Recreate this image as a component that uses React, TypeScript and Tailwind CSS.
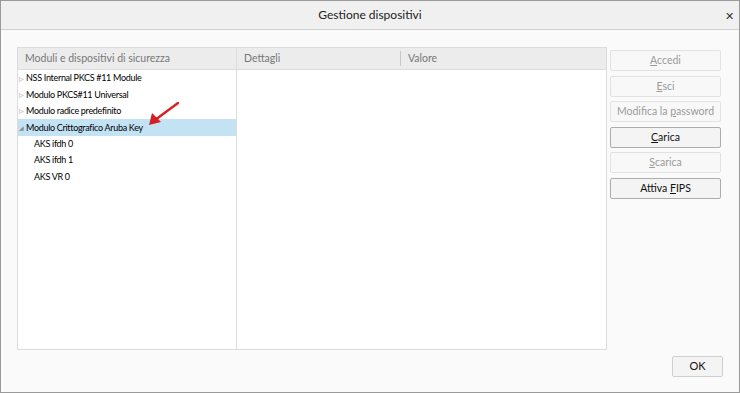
import React from 'react';

const FONT = { fontFamily: 'Lato, "Noto Sans", sans-serif' };

const modules = [
  { name: 'NSS Internal PKCS #11 Module', open: false },
  { name: 'Modulo PKCS#11 Universal', open: false },
  { name: 'Modulo radice predefinito', open: false },
  { name: 'Modulo Crittografico Aruba Key', open: true, selected: true },
];

const slots = ['AKS ifdh 0', 'AKS ifdh 1', 'AKS VR 0'];

const ActionButton = ({
  label,
  accel,
  enabled,
}: {
  label: string;
  accel: number;
  enabled?: boolean;
}) => (
  <button
    className={`h-[21px] w-[111px] whitespace-nowrap rounded-[2px] border px-0 text-[10.5px] leading-none ${
      enabled
        ? 'border-[#acacac] bg-[#f4f4f4] text-[#111]'
        : 'border-[#e2e2e2] bg-[#f8f8f8] text-[#9a9a9a]'
    }`}
  >
    {label.slice(0, accel)}
    <span className="underline">{label[accel]}</span>
    {label.slice(accel + 1)}
  </button>
);

const App = () => {
  return (
    <div
      className="flex h-[393px] w-[740px] flex-col border border-[#9a9a9a] bg-[#fafafa]"
      style={FONT}
    >
      <div className="relative flex h-[29px] shrink-0 items-center justify-center border-b border-[#cfcfcf] bg-[#f0f0f0] text-[12px] text-[#222]">
        Gestione dispositivi
        <span className="absolute right-[5px] top-[7px] text-[11px] text-[#333]">✕</span>
      </div>

      <div className="flex flex-1 gap-[3px] pl-[16px] pr-[18px] pt-[17px]">
        <div className="flex h-[303px] flex-1 border border-[#dcdcdc] bg-white">
          <div className="relative flex w-[219px] flex-col border-r border-[#dcdcdc]">
            <div className="flex h-[22px] items-center border-b border-[#dcdcdc] bg-[#ececec] pl-[7px] text-[10.5px] text-[#777]">
              Moduli e dispositivi di sicurezza
            </div>
            <div className="flex flex-col">
              {modules.map((m) => (
                <div
                  key={m.name}
                  className={`flex h-[16.4px] items-center pl-[1px] text-[9px] tracking-[-0.3px] text-black ${
                    m.selected ? 'bg-[#c3e3f5]' : ''
                  }`}
                >
                  <span className="mr-[2px] w-[5px] text-[6px] text-[#8a8a8a]">
                    {m.open ? '◢' : '▷'}
                  </span>
                  {m.name}
                </div>
              ))}
              {slots.map((s) => (
                <div
                  key={s}
                  className="flex h-[16.4px] items-center pl-[16px] text-[9px] tracking-[-0.3px] text-black"
                >
                  {s}
                </div>
              ))}
            </div>
            <svg
              className="absolute left-[129px] top-[52px]"
              width="34"
              height="28"
              viewBox="0 0 34 28"
            >
              <line x1="31" y1="3" x2="8" y2="20" stroke="#d42020" strokeWidth="2.4" strokeLinecap="round" />
              <polygon points="2,25 5,13 14,22" fill="#d42020" />
            </svg>
          </div>
          <div className="flex flex-1 flex-col">
            <div className="flex h-[22px] items-center border-b border-[#dcdcdc] bg-[#ececec] text-[10.5px] text-[#777]">
              <div className="w-[164px] border-r border-[#c8c8c8] pl-[7px]">Dettagli</div>
              <div className="pl-[7px]">Valore</div>
            </div>
          </div>
        </div>

        <div className="flex w-[111px] flex-col gap-[4.5px] pt-[3px]">
          <ActionButton label="Accedi" accel={0} />
          <ActionButton label="Esci" accel={0} />
          <ActionButton label="Modifica la password" accel={12} />
          <ActionButton label="Carica" accel={0} enabled />
          <ActionButton label="Scarica" accel={0} />
          <ActionButton label="Attiva FIPS" accel={7} enabled />
        </div>
      </div>

      <div className="flex justify-end pb-[15px] pr-[16px]">
        <button className="h-[21px] w-[51px] rounded-[2px] border border-[#cfcfcf] bg-[#f4f4f4] text-[11px] text-[#111]">
          OK
        </button>
      </div>
    </div>
  );
};

export default App;
